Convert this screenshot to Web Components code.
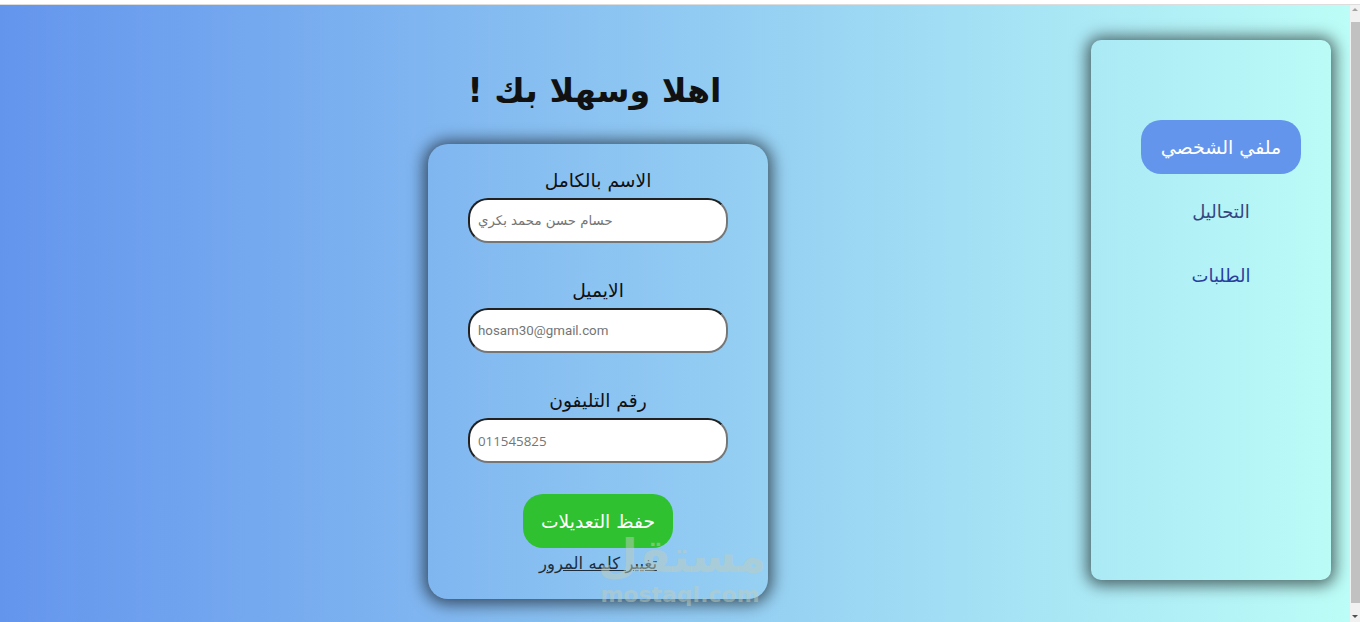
<!DOCTYPE html>
<html lang="ar">
<head>
<meta charset="utf-8">
<title>ملفي الشخصي</title>
<style>
  html, body { margin: 0; height: 622px; overflow: hidden; }
  body { font-family: "DejaVu Sans", "Noto Sans", sans-serif; background: #fff; }
</style>
</head>
<body>
<profile-page>
  <h-title slot="title">اهلا وسهلا بك !</h-title>
  <form-field slot="fields" label="الاسم بالكامل">حسام حسن محمد بكري</form-field>
  <form-field slot="fields" label="الايميل" font="Roboto">hosam30@gmail.com</form-field>
  <form-field slot="fields" label="رقم التليفون" font="Open Sans">011545825</form-field>
  <nav-item slot="nav" active>ملفي الشخصي</nav-item>
  <nav-item slot="nav" color="#35467f">التحاليل</nav-item>
  <nav-item slot="nav" color="#2a3f9e">الطلبات</nav-item>
</profile-page>

<script>
class HTitle extends HTMLElement {
  constructor() {
    super();
    this.attachShadow({ mode: "open" }).innerHTML = `
      <style>
        :host { display: block; text-align: center; font-size: 33.3px; font-weight: 700; line-height: 38px; color: #111; }
      </style>
      <slot></slot>`;
  }
}
customElements.define("h-title", HTitle);

class FormField extends HTMLElement {
  constructor() {
    super();
    const font = this.getAttribute("font");
    this.attachShadow({ mode: "open" }).innerHTML = `
      <style>
        :host { display: block; text-align: center; margin-bottom: 37px; }
        label { display: block; font-size: 18.7px; line-height: 22px; margin-bottom: 6px; color: #111; }
        .input {
          box-sizing: border-box; width: 260px; height: 45px; margin: 0 auto;
          background: #fff; border: 2px inset #767676; border-radius: 20px;
          padding: 0 8px; display: flex; align-items: center; justify-content: flex-start;
          direction: ltr; font-size: 13.33px; color: #757575;
          ${font ? `font-family: "${font}", sans-serif;` : ""}
        }
      </style>
      <label>${this.getAttribute("label")}</label>
      <div class="input"><slot></slot></div>`;
  }
}
customElements.define("form-field", FormField);

class NavItem extends HTMLElement {
  constructor() {
    super();
    const color = this.getAttribute("color") || "#fff";
    this.attachShadow({ mode: "open" }).innerHTML = `
      <style>
        :host {
          display: flex; align-items: center; justify-content: center;
          height: 54px; margin-bottom: 10px; border-radius: 20px;
          font-size: 18px; color: ${color};
        }
        :host([active]) { background: #6495ed; font-size: 19px; }
      </style>
      <slot></slot>`;
  }
}
customElements.define("nav-item", NavItem);

class ProfilePage extends HTMLElement {
  constructor() {
    super();
    this.attachShadow({ mode: "open" }).innerHTML = `
      <style>
        :host { display: flex; flex-direction: column; height: 622px; position: relative; }
        .top { height: 5px; background: #fff; border-bottom: 1px solid #ddd; box-sizing: border-box; flex: none; }
        .view { flex: 1; display: flex; min-height: 0; }
        .page {
          flex: 1; display: flex; direction: rtl; min-width: 0;
          background: linear-gradient(90deg, #6495ed, #bcfdf7);
        }
        aside {
          box-sizing: border-box; flex: none; width: 240px; height: 540px;
          margin: 35px 19px 0 0; padding: 80px 30px 0 50px;
          border-radius: 10px; box-shadow: 0 1px 16px 4px rgba(0, 0, 0, .6);
        }
        main { flex: 1; min-width: 0; padding: 67px 0 0 105px; display: flex; flex-direction: column; align-items: center; box-sizing: border-box; }
        .title { margin: 0 7px 34px 0; }
        .card {
          box-sizing: border-box; width: 340px; height: 455px; padding: 26px 40px 0;
          border-radius: 20px; box-shadow: 0 1px 16px 4px rgba(0, 0, 0, .6);
          display: flex; flex-direction: column; align-items: center;
        }
        .fields { display: block; width: 260px; }
        button {
          width: 150px; height: 54px; margin-top: -6px; border: 0; border-radius: 20px;
          background: #2fc12f; color: #fff; font: inherit; font-size: 18.7px;
        }
        a { margin-top: 5px; font-size: 16.5px; line-height: 22px; color: #1d2f3f; text-decoration: underline; }
        .scrollbar { flex: none; width: 10px; background: #f1f1f1; display: flex; flex-direction: column; align-items: center; }
        .scrollbar svg { display: block; flex: none; }
        .thumb { width: 9px; margin-left: 1px; height: 581px; margin-top: 8px; margin-bottom: 9px; background: #c1c1c1; }
        .mark { position: absolute; left: 598px; top: 530px; width: 164px; text-align: center; color: rgba(190, 205, 190, .5); pointer-events: none; }
        .mark b { display: block; font-size: 46px; line-height: 52px; }
        .mark span { display: block; font-size: 22px; font-weight: 700; line-height: 26px; }
      </style>
      <div class="top"></div>
      <div class="view">
        <div class="page">
          <aside><slot name="nav"></slot></aside>
          <main>
            <div class="title"><slot name="title"></slot></div>
            <div class="card">
              <div class="fields"><slot name="fields"></slot></div>
              <button>حفظ التعديلات</button>
              <a href="#">تغيير كلمه المرور</a>
            </div>
          </main>
        </div>
        <div class="scrollbar">
          <svg width="10" height="9" viewBox="0 0 10 9"><path d="M5 3 8 6H2z" fill="#a3a3a3"/></svg>
          <div class="thumb"></div>
          <svg width="10" height="9" viewBox="0 0 10 9"><path d="M2 3h6L5 6z" fill="#505050"/></svg>
        </div>
      </div>
      <div class="mark"><b>مستقل</b><span>mostaql.com</span></div>`;
  }
}
customElements.define("profile-page", ProfilePage);
</script>
</body>
</html>
